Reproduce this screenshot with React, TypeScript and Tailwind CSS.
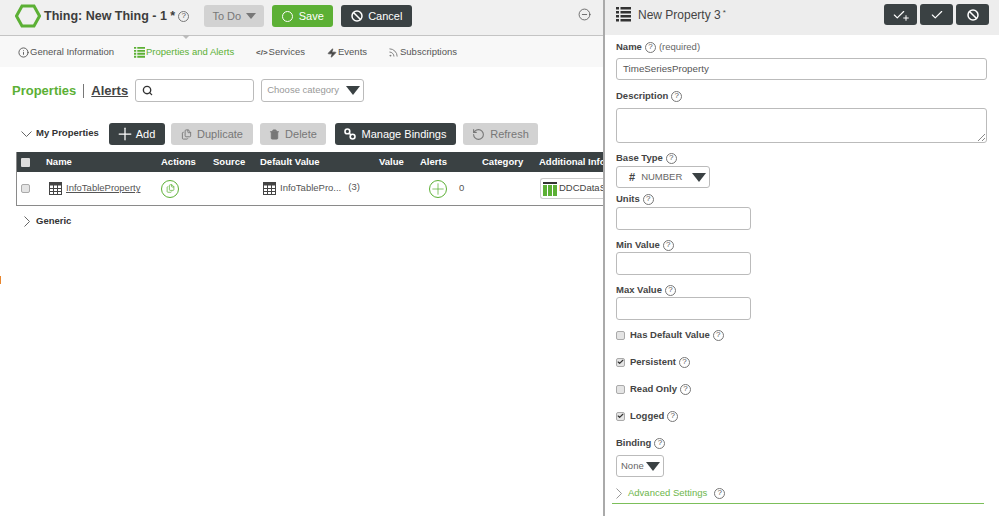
import { ReactNode } from 'react'
import { Search, Info, Rss, Zap, Plus, Check, Ban, CircleMinus, Files, Trash2, RotateCcw } from 'lucide-react'

const Help = ({ className = '' }: { className?: string }) => (
  <span className={`inline-flex items-center justify-center w-[11px] h-[11px] rounded-full border border-[#777] text-[8px] font-normal leading-none text-[#555] ${className}`}>?</span>
)

const TableIcon = () => (
  <svg width="13" height="13" viewBox="0 0 13 13" className="shrink-0">
    <rect x="0.5" y="0.5" width="12" height="12" fill="#fff" stroke="#444" />
    <rect x="0.5" y="0.5" width="12" height="3" fill="#444" />
    <path d="M4.5 3v10M8.5 3v10M0 6.5h13M0 9.5h13" stroke="#444" />
  </svg>
)

const ListIcon = ({ color, size }: { color: string; size: number }) => (
  <svg width={size} height={size} viewBox="0 0 15 15" className="shrink-0" fill={color}>
    <path d="M0 0h3v2.5H0zM4.5 0H15v2.5H4.5zM0 4h3v2.5H0zM4.5 4H15v2.5H4.5zM0 8h3v2.5H0zM4.5 8H15v2.5H4.5zM0 12h3v2.5H0zM4.5 12H15v2.5H4.5z" />
  </svg>
)

const ChevronDownThin = () => (
  <svg width="11" height="7" viewBox="0 0 11 7" className="shrink-0" fill="none" stroke="#666">
    <path d="M0.5 0.5l5 5 5-5" />
  </svg>
)

const ChevronRightThin = ({ stroke = '#666' }: { stroke?: string }) => (
  <svg width="7" height="11" viewBox="0 0 7 11" className="shrink-0" fill="none" stroke={stroke}>
    <path d="M0.5 0.5l5 5-5 5" />
  </svg>
)

const Caret = ({ className = '' }: { className?: string }) => (
  <span className={`w-0 h-0 border-x-[7px] border-x-transparent border-t-[9px] border-t-[#3a4143] ${className}`} />
)

const BindingsIcon = () => (
  <svg width="12" height="12" viewBox="0 0 12 12" className="shrink-0" fill="none" stroke="#fff" strokeWidth="1.6">
    <circle cx="3.4" cy="3.4" r="2.4" />
    <circle cx="8.6" cy="8.6" r="2.4" />
    <path d="M5 5l2 2" />
  </svg>
)

function ActionButton({ dark, icon, label, width }: { dark?: boolean; icon: ReactNode; label: string; width: string }) {
  return (
    <div className={`h-[22px] rounded-[3px] flex items-center justify-center gap-[5px] text-[11px] ${width} ${dark ? 'bg-[#3a4143] text-white' : 'bg-[#d2d2d2] text-[#777]'}`}>
      {icon}
      <span>{label}</span>
    </div>
  )
}

function Label({ text, extra }: { text: string; extra?: ReactNode }) {
  return (
    <div className="flex items-center gap-[3px] h-[14px] text-[9.5px] font-bold text-[#444]">
      <span>{text}</span>
      <Help />
      {extra}
    </div>
  )
}

function Field({ text, className = '', gap }: { text: string; className?: string; gap: string }) {
  return (
    <div className={className}>
      <Label text={text} />
      <div className={`h-[23px] w-[135px] bg-white border border-[#bbb] rounded-[3px] ${gap}`} />
    </div>
  )
}

function CheckRow({ text, checked, className = '' }: { text: string; checked?: boolean; className?: string }) {
  return (
    <div className={`flex items-center gap-[5px] h-[14px] ${className}`}>
      <span className="w-[9px] h-[9px] rounded-[2px] border border-[#aaa] bg-[#e4e4e4] flex items-center justify-center">
        {checked && <Check size={8} strokeWidth={4} className="text-[#333]" />}
      </span>
      <Label text={text} />
    </div>
  )
}

const tabs = [
  { label: 'General Information', icon: <Info size={11} />, width: 'w-[116px]', active: false },
  { label: 'Properties and Alerts', icon: <ListIcon color="#5cb035" size={11} />, width: 'w-[122px]', active: true },
  { label: 'Services', icon: <span className="text-[8px] font-bold leading-none">&lt;/&gt;</span>, width: 'w-[71px]', active: false },
  { label: 'Events', icon: <Zap size={10} fill="#444" />, width: 'w-[61px]', active: false },
  { label: 'Subscriptions', icon: <Rss size={11} className="text-[#777]" />, width: 'w-[80px]', active: false },
]

const cols = [
  { label: 'Name', width: 'w-[115px]' },
  { label: 'Actions', width: 'w-[52px]' },
  { label: 'Source', width: 'w-[47px]' },
  { label: 'Default Value', width: 'w-[119px]' },
  { label: 'Value', width: 'w-[41px]' },
  { label: 'Alerts', width: 'w-[62px]' },
  { label: 'Category', width: 'w-[57px]' },
  { label: 'Additional Info', width: 'w-[70px]' },
]

export default function App() {
  return (
    <div className="w-[999px] h-[516px] flex overflow-hidden bg-white text-[#444] font-['Liberation_Sans',Arial,sans-serif] relative">
      <span className="absolute left-0 top-[276px] w-[1px] h-[8px] bg-[#e8862e]" />

      <div className="w-[603px] shrink-0 overflow-hidden">
        <div className="h-[36px] bg-[#f0f0f0] border-b border-[#c4c4c4] flex items-center pl-[15px] pb-[3px] relative">
          <svg width="26" height="24" viewBox="0 0 26 24" className="shrink-0">
            <path d="M7 2h12l5.5 10L19 22H7L1.5 12z" fill="none" stroke="#5cb035" strokeWidth="3" />
          </svg>
          <span className="ml-[3px] text-[12.5px] font-bold text-[#3d3d3d] whitespace-nowrap">Thing: New Thing - 1 *</span>
          <Help className="ml-[3px]" />
          <div className="ml-[15px] w-[60px] h-[22px] rounded-[3px] bg-[#d2d2d2] text-[#777] text-[11px] flex items-center justify-center gap-[5px]">
            To Do <span className="w-0 h-0 border-x-[5px] border-x-transparent border-t-[6px] border-t-[#777]" />
          </div>
          <div className="ml-[8px] w-[61px] h-[22px] rounded-[3px] bg-[#5cb035] text-white text-[11px] flex items-center justify-center gap-[6px]">
            <span className="w-[11px] h-[11px] rounded-full border-[1.5px] border-white" />Save
          </div>
          <div className="ml-[8px] w-[71px] h-[22px] rounded-[3px] bg-[#3a4143] text-white text-[11px] flex items-center justify-center gap-[5px]">
            <Ban size={12} strokeWidth={3} />Cancel
          </div>
          <CircleMinus size={13} strokeWidth={1.5} className="absolute left-[578px] top-[8px] text-[#555]" />
          <span className="absolute left-[182px] top-[35px] w-0 h-0 border-x-[4px] border-x-transparent border-t-[4px] border-t-[#bbb]" />
        </div>

        <div className="h-[31px] bg-[#f8f8f8] flex items-center pl-[18px] pt-[2px] text-[9.5px]">
          {tabs.map(t => (
            <div key={t.label} className={`${t.width} shrink-0 flex items-center gap-[1px] whitespace-nowrap ${t.active ? 'text-[#5cb035]' : 'text-[#555]'}`}>
              {t.icon}
              <span>{t.label}</span>
            </div>
          ))}
        </div>

        <div className="flex items-center h-[23px] mt-[12px] pl-[12px]">
          <span className="text-[13px] font-bold text-[#5cb035]">Properties</span>
          <span className="w-px h-[14px] bg-[#777] ml-[7px] mr-[7px]" />
          <span className="text-[13px] font-bold text-[#444] underline">Alerts</span>
          <div className="ml-[7px] w-[119px] h-[23px] bg-white border border-[#bbb] rounded-[3px] flex items-center pl-[6px]">
            <Search size={11} strokeWidth={3} className="text-[#333]" />
          </div>
          <div className="ml-[7px] w-[103px] h-[23px] bg-white border border-[#bbb] rounded-[3px] flex items-center justify-between pl-[5px] pr-[3px] text-[9.5px] text-[#999]">
            Choose category <Caret />
          </div>
        </div>

        <div className="flex items-center h-[22px] mt-[21px] pl-[21px]">
          <ChevronDownThin />
          <span className="ml-[4px] w-[73px] -mt-[2px] text-[9.5px] font-bold text-[#333]">My Properties</span>
          <ActionButton dark width="w-[56px]" icon={<Plus size={20} strokeWidth={1.5} className="-mx-[4px]" />} label="Add" />
          <ActionButton width="w-[82px] ml-[6px]" icon={<Files size={11} />} label="Duplicate" />
          <ActionButton width="w-[66px] ml-[7px]" icon={<Trash2 size={11} fill="#777" />} label="Delete" />
          <ActionButton dark width="w-[121px] ml-[9px]" icon={<BindingsIcon />} label="Manage Bindings" />
          <ActionButton width="w-[75px] ml-[7px]" icon={<RotateCcw size={13} />} label="Refresh" />
        </div>

        <div className="ml-[16px] mt-[7px] border-b border-l border-[#8a8a8a]">
          <div className="h-[20px] bg-[#3a4143] flex items-center text-white text-[9.5px] font-bold whitespace-nowrap overflow-hidden">
            <span className="w-[29px] shrink-0 pl-[4px]"><span className="block w-[9px] h-[9px] bg-[#ddd] rounded-[1px]" /></span>
            {cols.map(c => (
              <span key={c.label} className={`${c.width} shrink-0`}>{c.label}</span>
            ))}
          </div>
          <div className="h-[33px] flex items-center text-[9.5px] whitespace-nowrap overflow-hidden">
            <span className="w-[32px] shrink-0 pl-[4px]"><span className="block w-[9px] h-[9px] bg-[#e4e4e4] border border-[#aaa] rounded-[2px]" /></span>
            <div className="w-[112px] shrink-0 flex items-center gap-[4px]">
              <TableIcon /><span className="underline text-[#555]">InfoTableProperty</span>
            </div>
            <div className="w-[102px] shrink-0">
              <span className="w-[18px] h-[18px] rounded-full border border-[#5cb035] flex items-center justify-center">
                <Files size={9} className="text-[#5cb035]" />
              </span>
            </div>
            <div className="w-[166px] shrink-0 flex items-center gap-[4px] text-[#555]">
              <TableIcon /><span>InfoTablePro...</span><span className="ml-[3px] -mt-[2px]">(3)</span>
            </div>
            <div className="w-[30px] shrink-0">
              <span className="w-[18px] h-[18px] rounded-full border border-[#5cb035] flex items-center justify-center">
                <Plus size={18} strokeWidth={1} className="text-[#5cb035] shrink-0" />
              </span>
            </div>
            <span className="w-[81px] shrink-0 text-[#555]">0</span>
            <div className="w-[64px] h-[21px] shrink-0 border border-[#ccc] rounded-l-[3px] border-r-0 flex items-center gap-[2px] pl-[2px] text-[#444]">
              <svg width="14" height="14" viewBox="0 0 14 14" className="shrink-0">
                <rect y="0" width="14" height="2" fill="#333" />
                <path d="M0 3h4v11H0zM5 3h4v11H5zM10 3h4v11h-4z" fill="#5cb035" />
              </svg>
              <span className="text-[9.5px]">DDCDataS</span>
            </div>
          </div>
        </div>

        <div className="flex items-center mt-[8px] pl-[24px]">
          <ChevronRightThin />
          <span className="ml-[5px] text-[9.5px] font-bold text-[#333]">Generic</span>
        </div>
      </div>

      <div className="w-[2px] shrink-0 bg-[#aaa]" />

      <div className="flex-1 min-w-0">
        <div className="h-[35px] bg-[#ededed] flex items-center pl-[11px] pr-[10px] pb-[6px]">
          <ListIcon color="#333" size={15} />
          <span className="ml-[7px] text-[12px] text-[#444]">New Property 3</span>
          <span className="ml-[2px] text-[8px] -mt-[4px]">*</span>
          <div className="ml-auto flex gap-[3px]">
            {[<span key="a" className="flex items-center"><Check size={14} /><Plus size={8} strokeWidth={3} className="-ml-[4px] mt-[6px]" /></span>, <Check key="b" size={14} strokeWidth={2} />, <Ban key="c" size={12} strokeWidth={3} />].map((icon, i) => (
              <div key={i} className="w-[33px] h-[21px] rounded-[3px] bg-[#3a4143] text-white flex items-center justify-center">{icon}</div>
            ))}
          </div>
        </div>

        <div className="pl-[11px] pr-[12px]">
          <div className="mt-[5px]">
            <Label text="Name" extra={<span className="font-normal text-[#666]">(required)</span>} />
            <div className="mt-[4px] h-[22px] bg-white border border-[#bbb] rounded-[3px] flex items-center pl-[6px] text-[9.75px] text-[#555]">TimeSeriesProperty</div>
          </div>
          <div className="mt-[9px]">
            <Label text="Description" />
            <div className="mt-[5px] h-[35px] bg-white border border-[#bbb] rounded-[3px] relative">
              <svg width="7" height="7" viewBox="0 0 7 7" className="absolute right-[1px] bottom-[1px]" stroke="#888">
                <path d="M0 7l7-7M4 7l3-3" />
              </svg>
            </div>
          </div>
          <div className="mt-[8px]">
            <Label text="Base Type" />
            <div className="mt-[1px] w-[94px] h-[22px] bg-white border border-[#bbb] rounded-[3px] flex items-center pl-[12px] pr-[3px] text-[9.5px] text-[#666]">
              <span className="font-bold text-[11px] text-[#444] mr-[6px]">#</span>NUMBER
              <Caret className="ml-auto" />
            </div>
          </div>
          <Field text="Units" className="mt-[4px]" gap="mt-[1px]" />
          <Field text="Min Value" className="mt-[8px]" gap="mt-0" />
          <Field text="Max Value" className="mt-[8px]" gap="mt-0" />
          <CheckRow text="Has Default Value" className="mt-[8px]" />
          <CheckRow text="Persistent" checked className="mt-[13px]" />
          <CheckRow text="Read Only" className="mt-[13px]" />
          <CheckRow text="Logged" checked className="mt-[13px]" />
          <div className="mt-[13px]">
            <Label text="Binding" />
            <div className="mt-[5px] w-[48px] h-[22px] bg-white border border-[#bbb] rounded-[3px] flex items-center justify-between pl-[4px] pr-[3px] text-[9.5px] text-[#666]">
              None <Caret />
            </div>
          </div>
          <div className="-ml-[4px] mr-[3px] border-b border-[#7cbf5a] h-[27px] flex items-center pl-[4px] pt-[6px] gap-[5px]">
            <ChevronRightThin stroke="#999" />
            <span className="text-[9.5px] text-[#6db64b]">Advanced Settings</span>
            <Help className="ml-[2px]" />
          </div>
        </div>
      </div>
    </div>
  )
}
